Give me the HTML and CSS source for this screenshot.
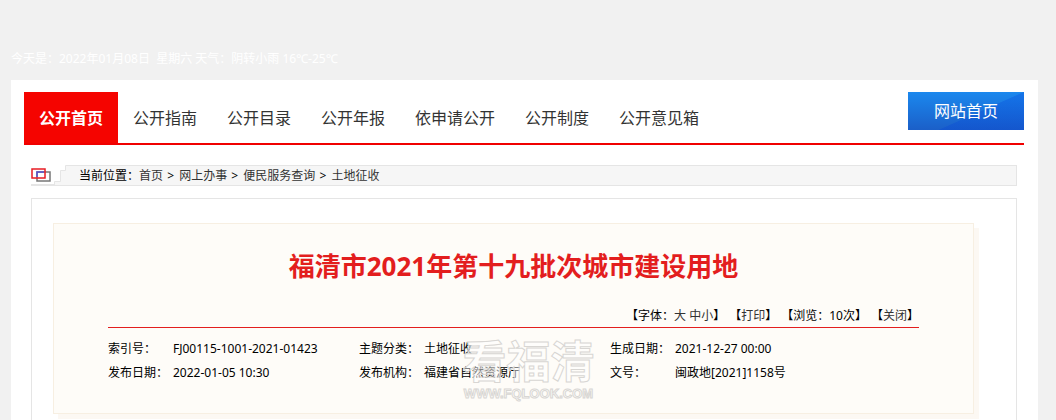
FILE: index.html
```html
<!DOCTYPE html>
<html lang="zh-CN">
<head>
    <meta charset="UTF-8">
    <meta name="viewport" content="width=device-width, initial-scale=1.0">
    <title>福清市2021年第十九批次城市建设用地</title>
    <link rel="stylesheet" href="styles.css">
</head>
<body>
    <div class="top-info">今天是：2022年01月08日&nbsp; 星期六 天气：阴转小雨 16℃-25℃</div>

    <div class="main">
        <!-- Navigation -->
        <div class="nav">
            <ul class="nav-list">
                <li><a class="current" href="#">公开首页</a></li>
                <li><a href="#">公开指南</a></li>
                <li><a href="#">公开目录</a></li>
                <li><a href="#">公开年报</a></li>
                <li><a href="#">依申请公开</a></li>
                <li><a href="#">公开制度</a></li>
                <li><a href="#">公开意见箱</a></li>
            </ul>
            <a class="home-btn" href="#">网站首页</a>
        </div>

        <!-- Breadcrumb -->
        <div class="location">
            <svg class="location-icon" width="36" height="22" viewBox="0 0 36 22">
                <path d="M0 20H24" fill="none" stroke="#e5e5e5" stroke-width="2"/>
                <path d="M36 1H34V5H30V16H24V21H36Z" fill="#f6f6f6"/>
                <path d="M36 .5H34.500V5.500H29.500V16.500H23.500V20.500H36" fill="none" stroke="#e5e5e5"/>
                <rect x="6" y="7" width="13" height="9" fill="none" stroke="#777" stroke-width="1.500"/>
                <rect x="1" y="4" width="13" height="9" fill="none" stroke="#e81c24" stroke-width="1.500"/>
                <path d="M6 12V7H13" fill="none" stroke="#5a50d0" stroke-width="1.500"/>
            </svg>
            <div class="location-text">当前位置：<a href="#">首页</a> <span class="sep">&gt;</span> <a href="#">网上办事</a> <span class="sep">&gt;</span> <a href="#">便民服务查询</a> <span class="sep">&gt;</span> <a href="#">土地征收</a></div>
        </div>

        <!-- Article -->
        <div class="content">
            <div class="card">
                <h1>福清市2021年第十九批次城市建设用地</h1>
                <div class="tools">
                    <span>【字体：<a href="#">大</a> <a href="#">中</a><a href="#">小</a>】</span>
                    <span>【<a href="#">打印</a>】</span>
                    <span>【浏览：10次】</span>
                    <span>【<a href="#">关闭</a>】</span>
                </div>
                <table class="info">
                    <tr>
                        <th scope="row">索引号：</th><td>FJ00115-1001-2021-01423</td>
                        <th scope="row">主题分类：</th><td>土地征收</td>
                        <th scope="row">生成日期：</th><td>2021-12-27 00:00</td>
                    </tr>
                    <tr>
                        <th scope="row">发布日期：</th><td>2022-01-05 10:30</td>
                        <th scope="row">发布机构：</th><td>福建省自然资源厅</td>
                        <th scope="row">文号：</th><td>闽政地[2021]1158号</td>
                    </tr>
                </table>
                <div class="watermark">
                    <div class="watermark-name">看福清</div>
                    <div class="watermark-url">WWW.FQLOOK.COM</div>
                </div>
            </div>
        </div>
    </div>
</body>
</html>
```

FILE: styles.css
```css
* {
    box-sizing: border-box;
}

body {
    margin: 0;
    padding: 0 18px 0 11px;
    background: #f1f1f1;
    color: #000;
    font-family: "Noto Sans", "Noto Sans CJK SC", sans-serif;
    font-size: 12px;
}

a {
    color: #333;
    text-decoration: none;
}

a:hover {
    color: #e31e1e;
}

.top-info {
    height: 80px;
    padding-top: 49px;
    line-height: 20px;
    color: #fff;
}

.main {
    padding: 12px 13px 0;
    background: #fff;
}

/* Navigation */
.nav {
    display: flex;
    justify-content: space-between;
    align-items: flex-start;
    margin-right: 1px;
    border-bottom: 2px solid #f00000;
}

.nav-list {
    display: flex;
    margin: 0;
    padding: 0;
    list-style: none;
}

.nav-list a {
    display: block;
    padding: 1px 15px 0;
    font-size: 16px;
    line-height: 50px;
}

.nav-list .current {
    background: #f50400;
    color: #fff;
    font-weight: bold;
}

.home-btn {
    width: 116px;
    height: 38px;
    background: linear-gradient(156deg, transparent 57%, rgba(0, 60, 220, 0.25) 58%), linear-gradient(#1b88ee, #1b5fc8);
    color: #fff;
    font-size: 16px;
    line-height: 38px;
    text-align: center;
}

/* Breadcrumb */
.location {
    display: flex;
    margin: 20px 8px 0 7px;
}

.location-icon {
    flex: none;
}

.location-text {
    flex: 1;
    height: 21px;
    padding-left: 12px;
    border: 1px solid #e5e5e5;
    border-left: 0;
    background: #f6f6f6;
    line-height: 19px;
}

.sep {
    margin: 0 2px 0 1px;
}

/* Article */
.content {
    margin: 11px 8px 0 7px;
    padding: 24px 42px 7px 21px;
    border: 1px solid #e5e5e5;
    border-bottom: 0;
}

.card {
    position: relative;
    padding: 24px 54px 28px;
    border: 1px solid #f7efe2;
    background: #fefcf8;
    box-shadow: 5px 5px 0 #fcf8f3;
}

h1 {
    margin: 0;
    color: #e31e1e;
    font-size: 26px;
    line-height: 36px;
    text-align: center;
}

.tools {
    display: flex;
    justify-content: flex-end;
    gap: 4px;
    margin-top: 21px;
    border-bottom: 1px solid #e31e1e;
    line-height: 22px;
}

.info {
    width: 100%;
    margin-top: 9px;
    border-collapse: collapse;
    table-layout: fixed;
}

.info th,
.info td {
    padding: 0;
    line-height: 24px;
    text-align: left;
    white-space: nowrap;
}

.info th {
    width: 65px;
    font-weight: normal;
}

.info td {
    width: 186px;
}

.info td:last-child {
    width: auto;
}

/* Watermark over the table */
.watermark {
    position: absolute;
    top: 113px;
    left: 50%;
    width: 140px;
    margin-left: -55px;
    color: rgba(255, 255, 255, 0.5);
    font-weight: bold;
    text-align: center;
    white-space: nowrap;
    pointer-events: none;
    -webkit-text-stroke: 1px #d8d6d3;
}

.watermark-name {
    font-size: 44px;
    line-height: 48px;
}

.watermark-url {
    font-family: "Liberation Sans", sans-serif;
    font-size: 13px;
    line-height: 18px;
}
```
